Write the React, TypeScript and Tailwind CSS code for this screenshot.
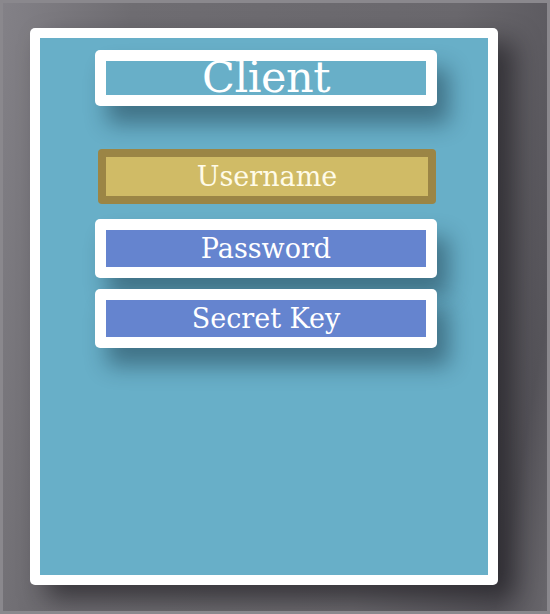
import React from "react";

const serif = { fontFamily: '"DejaVu Serif", "Liberation Serif", serif' };

export default function App() {
  return (
    <div
      className="w-[550px] h-[614px] overflow-hidden border-[3px] border-[#8a888d] bg-[linear-gradient(100deg,#838187_0%,#6f6d72_20%,#6a686d_70%,#56545a_92%,#69676c_100%)] pt-[25px] pl-[27px]"
      style={serif}
    >
      <div className="w-[468px] h-[557px] rounded-[5px] bg-white p-[10px] shadow-[16px_14px_26px_rgba(20,18,24,0.6)]">
        <div className="h-full w-full bg-[#68afc8] pt-[12px] pl-[55px]">
          <div className="w-[342px] h-[56px] rounded-[5px] bg-white p-[11px] shadow-[12px_18px_22px_rgba(10,30,45,0.42)]">
            <div className="h-full w-full bg-[#68afc8] flex justify-center items-end overflow-visible">
              <span className="text-white text-[43px] leading-none translate-y-[4px] tracking-[-0.5px]">Client</span>
            </div>
          </div>

          <div className="mt-[43px] ml-[3px] w-[338px] h-[55px] rounded-[4px] bg-[#9b8545] p-[8px]">
            <div className="h-full w-full bg-[#d0bb66] flex items-center justify-center">
              <span className="text-[#fffbe8] text-[27px] leading-none">Username</span>
            </div>
          </div>

          <div className="mt-[15px] w-[342px] h-[59px] rounded-[5px] bg-white p-[11px] shadow-[12px_18px_22px_rgba(10,30,45,0.42)]">
            <div className="h-full w-full bg-[#6584cf] flex items-center justify-center">
              <span className="text-white text-[27px] leading-none">Password</span>
            </div>
          </div>

          <div className="mt-[11px] w-[342px] h-[59px] rounded-[5px] bg-white p-[11px] shadow-[12px_18px_22px_rgba(10,30,45,0.42)]">
            <div className="h-full w-full bg-[#6584cf] flex items-center justify-center">
              <span className="text-white text-[27px] leading-none">Secret Key</span>
            </div>
          </div>
        </div>
      </div>
    </div>
  );
}
